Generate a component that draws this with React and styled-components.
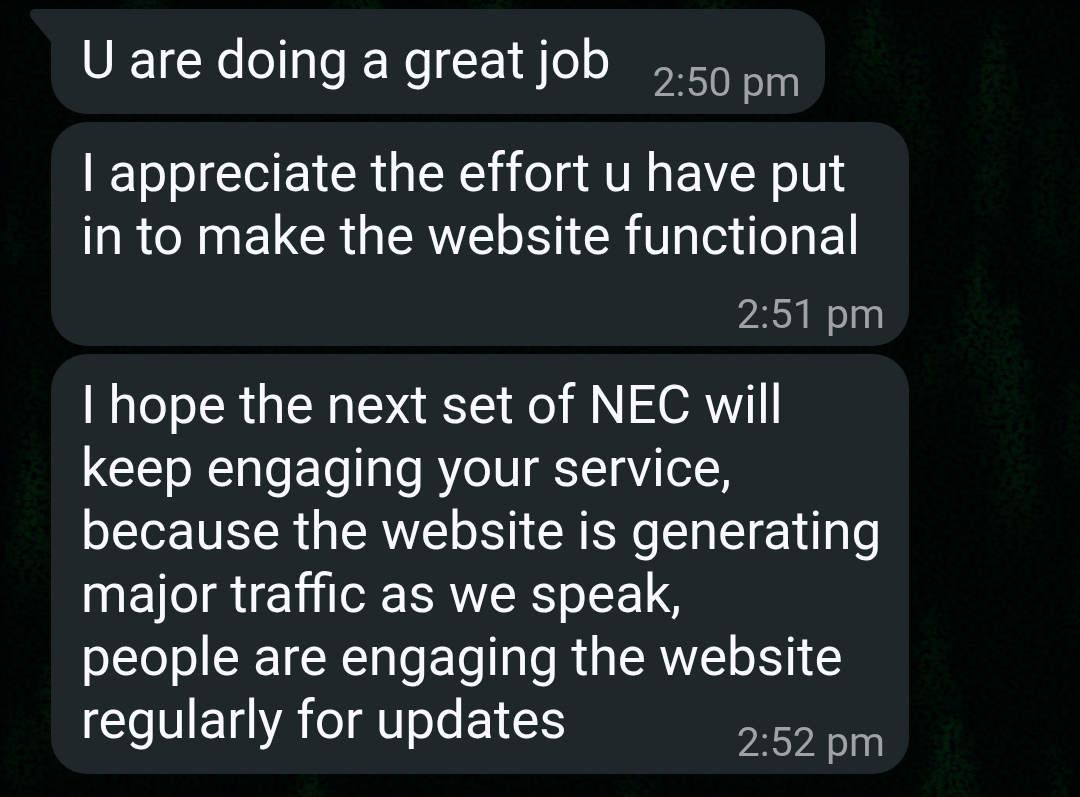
import styled, {createGlobalStyle, css} from "styled-components";

const messages = [
    {id: 1, text: "U are doing a great job", time: "2:50 pm", dateTime: "14:50", layout: "beside", tail: true},
    {id: 2, text: "I appreciate the effort u have put in to make the website functional", time: "2:51 pm", dateTime: "14:51", layout: "below"},
    {
        id: 3,
        text: "I hope the next set of NEC will keep engaging your service, because the website is generating major traffic as we speak,\npeople are engaging the website regularly for updates",
        time: "2:52 pm",
        dateTime: "14:52",
        layout: "tucked"
    },
];

// x, top, width, height, opacity
const trees = [
    [905, 24, 70, 200, 0.5],
    [982, 4, 90, 190, 0.7],
    [978, 122, 60, 130, 0.7],
    [966, 232, 80, 200, 0.7],
    [1040, 60, 60, 160, 0.4],
    [1035, 150, 60, 150, 0.4],
    [1076, 100, 60, 220, 0.5],
    [996, 282, 90, 220, 0.7],
    [1066, 355, 70, 150, 0.6],
    [1004, 390, 80, 190, 0.6],
    [918, 310, 40, 110, 0.5],
    [922, 585, 70, 180, 0.5],
    [938, 700, 110, 160, 0.9],
    [1045, 740, 40, 90, 0.8],
    [1078, 500, 60, 200, 0.4],
    [860, -20, 100, 150, 0.7],
    [700, -50, 120, 160, 0.8],
    [480, -60, 130, 160, 0.7],
    [350, -50, 120, 160, 0.9],
    [130, -60, 120, 160, 0.6],
    [22, 345, 40, 80, 0.4],
    [20, 405, 80, 240, 0.8],
    [44, 180, 50, 90, 0.4],
    [2, 190, 50, 90, 0.4],
    [40, 650, 50, 130, 0.8],
    [6, 690, 60, 130, 0.5],
    [300, 755, 80, 90, 0.8],
    [620, 762, 90, 90, 0.6],
];

function Forest() {
    return (
        <Backdrop viewBox="0 0 1080 797" preserveAspectRatio="xMidYMid slice" aria-hidden="true">
            <defs>
                <filter id="needles" x="0" y="0" width="100%" height="100%" colorInterpolationFilters="sRGB">
                    <feTurbulence type="fractalNoise" baseFrequency="0.09 0.12" numOctaves="5" seed="8" result="noise"/>
                    <feDisplacementMap in="SourceGraphic" in2="noise" scale="50" xChannelSelector="R" yChannelSelector="G" result="rough"/>
                    <feGaussianBlur in="rough" stdDeviation="4" result="soft"/>
                    <feTurbulence type="fractalNoise" baseFrequency="0.16 0.2" numOctaves="4" seed="3" result="fine"/>
                    <feColorMatrix in="fine" type="matrix" values="0 0 0 0 0  0 0 0 0 0  0 0 0 0 0  3 0 0 0 -0.8" result="grain"/>
                    <feComposite in="soft" in2="grain" operator="in"/>
                </filter>
                <linearGradient id="tree" x1="0" y1="0" x2="0" y2="1">
                    <stop offset="0" stopColor="#03220d"/>
                    <stop offset="0.5" stopColor="#021a09"/>
                    <stop offset="1" stopColor="#010804" stopOpacity="0"/>
                </linearGradient>
            </defs>
            <g filter="url(#needles)">
                <rect width="1080" height="797" fill="#010704"/>
                <g transform="translate(12 6)">
                    {trees.map(([x, y, w, h, opacity]) => (
                        <path
                            key={`${x}-${y}`}
                            d="M0 0 L.12 .2 L.07 .2 L.24 .4 L.15 .4 L.38 .65 L.24 .65 L.5 1 L-.5 1 L-.24 .65 L-.38 .65 L-.15 .4 L-.24 .4 L-.07 .2 L-.12 .2Z"
                            transform={`translate(${x} ${y}) scale(${w} ${h})`}
                            fill="url(#tree)"
                            opacity={opacity}
                        />
                    ))}
                </g>
            </g>
        </Backdrop>
    );
}

function Message({message}) {
    return (
        <Bubble $layout={message.layout} $tail={message.tail}>
            {message.tail && (
                <Tail viewBox="0 0 22 33" aria-hidden="true">
                    <path d="M22 0H6C1.500 0-.5 5 2.200 9L21.500 32.500H22Z"/>
                </Tail>
            )}
            <Text>{message.text}</Text>
            <Time dateTime={message.dateTime}>{message.time}</Time>
        </Bubble>
    );
}

export default function App() {
    return (
        <Chat>
            <GlobalStyle/>
            <Forest/>
            <MessageList>
                {messages.map((message) => <Message key={message.id} message={message}/>)}
            </MessageList>
        </Chat>
    );
}

const GlobalStyle = createGlobalStyle`
    body {
        margin: 0;
        background-color: #000204;
        font-family: Roboto, "Liberation Sans", sans-serif;
    }
`;

const Chat = styled.main`
    position: relative;
    min-height: 100vh;
    overflow: hidden;
`;

const Backdrop = styled.svg`
    position: absolute;
    inset: 0;
    width: 100%;
    height: 100%;
`;

const MessageList = styled.ol`
    position: relative;
    display: flex;
    flex-direction: column;
    align-items: flex-start;
    gap: 8px;
    margin: 0;
    padding: 9px 171px 23px 51px;
    list-style: none;
`;

const Text = styled.p`
    grid-area: 1 / 1;
    margin: 0;
    padding: 20px 0 22px;
    color: #f8faff;
    font-size: 53px;
    line-height: 63px;
    white-space: pre-line;
`;

const Time = styled.time`
    align-self: end;
    justify-self: end;
    padding-bottom: 8px;
    color: #9fa3a5;
    font-size: 41px;
    line-height: 48px;
    white-space: nowrap;
`;

const timeAreas = {
    beside: "1 / 2",
    below: "2 / 1",
    tucked: "1 / 1",
};

const Bubble = styled.li`
    position: relative;
    display: grid;
    column-gap: 42px;
    padding: 0 24px 0 30px;
    border-radius: 36px;
    background-color: #20272b;

    ${({$tail}) => $tail && css`
        border-top-left-radius: 0;
    `}

    & > ${Time} {
        grid-area: ${({$layout}) => timeAreas[$layout]};
    }
`;

const Tail = styled.svg`
    position: absolute;
    top: 0;
    right: 100%;
    width: 22px;
    height: 33px;
    fill: #20272b;
`;
